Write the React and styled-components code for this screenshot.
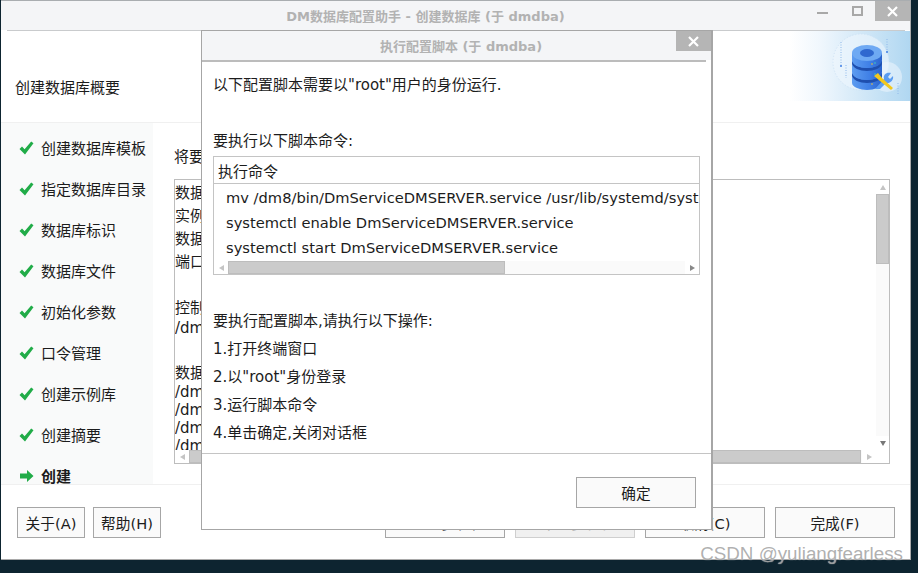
import React from 'react'
import styled, { createGlobalStyle } from 'styled-components'

const GlobalStyle = createGlobalStyle`
  html, body {
    margin: 0;
    background: #0d2430;
  }

  body {
    width: 918px;
    height: 573px;
    overflow: hidden;
    font-family: "DejaVu Sans", "Noto Sans CJK SC", sans-serif;
    font-size: 15px;
    color: #1c1c1c;
  }
`

const Window = styled.div`
  position: relative;
  box-sizing: border-box;
  display: flex;
  flex-direction: column;
  width: 910px;
  height: 560px;
  margin-left: 1px;
  background: #fff;
  border-top: 1px solid #a9adb0;
  border-right: 1px solid #a9a9a9;
  border-bottom: 1px solid #a9a9a9;
`

const TitleBar = styled.div`
  display: flex;
  flex: none;
  height: 29px;
  padding-left: 33px;
  background: #f4f5f7;
`

const TitleRule = styled.div`
  flex: none;
  height: ${p => p.$h}px;
  margin: 0 ${p => p.$right}px 0 ${p => p.$left}px;
  background: ${p => p.$color};
`

const TitleText = styled.div`
  flex: 1;
  padding-top: ${p => p.$top}px;
  padding-left: ${p => p.$left || 0}px;
  text-align: center;
  font-size: 13px;
  font-weight: bold;
  line-height: 20px;
  color: #b2b2b2;
`

const Controls = styled.div`
  display: flex;
  align-items: flex-start;
  flex: none;
  width: 93px;
`

const ControlSlot = styled.div`
  display: flex;
  align-items: center;
  justify-content: center;
  width: ${p => p.$width}px;
  height: 20px;
`

const MinGlyph = styled.div`
  width: 11px;
  height: 2px;
  margin-top: 3px;
  background: #a8a8a8;
`

const MaxGlyph = styled.div`
  box-sizing: border-box;
  width: 11px;
  height: 10px;
  border: 2px solid #a8a8a8;
`

const CloseButton = styled.div`
  display: flex;
  flex: none;
  align-items: center;
  justify-content: center;
  width: 35px;
  height: 20px;
  background: #b5b5b5;
`

const Header = styled.div`
  display: flex;
  flex: none;
  justify-content: space-between;
  height: 91px;
  border-bottom: 1px solid #f0f0f0;
`

const HeaderTitle = styled.div`
  padding: 47px 0 0 14px;
  line-height: 20px;
`

const Banner = styled.svg`
  display: block;
  flex: none;
  width: 120px;
  height: 70px;
`

const Main = styled.div`
  display: flex;
  flex: none;
  height: 361px;
  overflow: hidden;
  border-bottom: 1px solid #f0f0f0;
`

const Sidebar = styled.div`
  flex: none;
  box-sizing: border-box;
  width: 152px;
  padding-top: 4px;
  background: #f9fafa;
`

const Step = styled.div`
  display: flex;
  align-items: center;
  gap: 7px;
  height: 41px;
  padding-left: 18px;
  font-weight: ${p => (p.$active ? 'bold' : 'normal')};
`

const Content = styled.div`
  flex: 1;
  display: flex;
  flex-direction: column;
  padding: 24px 20px 0 21px;
`

const ContentLabel = styled.div`
  height: 32px;
  line-height: 20px;
`

const SummaryBox = styled.div`
  position: relative;
  box-sizing: border-box;
  display: grid;
  grid-template-columns: 1fr 13px;
  grid-template-rows: 1fr 13px;
  height: 285px;
  border: 1px solid #bdbdbd;
`

const SummaryText = styled.div`
  padding-top: 2px;
  overflow: hidden;
  white-space: nowrap;
`

const SummaryLine = styled.div`
  height: ${p => p.$h}px;
  line-height: ${p => p.$h}px;
`

const VScroll = styled.div`
  display: flex;
  flex-direction: column;
  align-items: center;
  background: #fafafa;
`

const HScroll = styled.div`
  display: flex;
  flex: none;
  align-items: center;
  background: #fafafa;
  height: 13px;
`

const ScrollGap = styled.div`
  flex: 1;
`

const ArrowCell = styled.div`
  display: flex;
  flex: none;
  align-items: center;
  justify-content: center;
  background: #fff;
  width: ${p => p.$w}px;
  height: ${p => p.$h}px;
`

const Thumb = styled.div`
  flex: none;
  box-sizing: border-box;
  background: #cbcbcb;
  border: 1px solid #bdbdbd;
  width: ${p => p.$w}px;
  height: ${p => p.$h}px;
`

const Corner = styled.div`
  background: #fff;
`

const Triangle = styled.div`
  width: 0;
  height: 0;
  border-style: solid;
  ${p => p.$dir === 'up' && `border-width: 0 3px 5px; border-color: transparent transparent ${p.$color};`}
  ${p => p.$dir === 'down' && `border-width: 5px 3px 0; border-color: ${p.$color} transparent transparent;`}
  ${p => p.$dir === 'left' && `border-width: 3px 5px 3px 0; border-color: transparent ${p.$color} transparent transparent;`}
  ${p => p.$dir === 'right' && `border-width: 3px 0 3px 5px; border-color: transparent transparent transparent ${p.$color};`}
`

const Footer = styled.div`
  display: flex;
  flex: 1;
  align-items: flex-start;
  padding: 22px 15px 0 16px;
`

const ButtonGroup = styled.div`
  display: flex;
  gap: ${p => p.$gap}px;
  margin-left: ${p => (p.$right ? 'auto' : '0')};
`

const Button = styled.div`
  box-sizing: border-box;
  display: flex;
  align-items: center;
  justify-content: center;
  width: ${p => p.$w || 120}px;
  height: 31px;
  background: ${p => (p.$disabled ? '#f0f0f0' : '#fafafa')};
  border: 1px solid ${p => (p.$disabled ? '#cfcfcf' : '#a6a6a6')};
  color: ${p => (p.$disabled ? '#aaa' : '#1c1c1c')};
  font-size: 14.67px;
`

const Dialog = styled.div`
  position: absolute;
  top: 29px;
  left: 200px;
  box-sizing: border-box;
  display: flex;
  flex-direction: column;
  width: 512px;
  height: 500px;
  background: #fff;
  border-left: 1px solid #a6a6a6;
  border-right: 2px solid #a6a6a6;
  border-bottom: 1px solid #a6a6a6;
  border-top: 1px solid #a6a6a6;
`

const DialogTitleBar = styled.div`
  display: flex;
  flex: none;
  height: 29px;
  background: #f4f5f7;
`

const DialogBody = styled.div`
  box-sizing: border-box;
  display: flex;
  flex: none;
  flex-direction: column;
  height: 392px;
  padding: 13px 11px 0;
  border-bottom: 1px solid #c4c4c4;
`

const Para = styled.div`
  line-height: 20px;
  margin-top: ${p => p.$top || 0}px;
`

const CommandTable = styled.div`
  box-sizing: border-box;
  display: flex;
  flex-direction: column;
  width: 487px;
  height: 119px;
  margin-top: 5px;
  border: 1px solid #c4c4c4;
`

const TableHead = styled.div`
  box-sizing: border-box;
  flex: none;
  height: 27px;
  padding: 5px 0 0 4px;
  line-height: 20px;
  border-bottom: 1px solid #c4c4c4;
`

const TableRows = styled.div`
  flex: 1;
  padding: 1px 0 0 12px;
  overflow: hidden;
  white-space: nowrap;
  font-size: 14.67px;
`

const TableRow = styled.div`
  height: 25px;
  line-height: 25px;
`

const StepList = styled.div`
  display: flex;
  flex-direction: column;
  gap: 8px;
  margin-top: 36px;
`

const DialogFooter = styled.div`
  display: flex;
  flex: 1;
  justify-content: flex-end;
  padding: 23px 15px 0 0;
`

const Watermark = styled.div`
  position: absolute;
  right: 7px;
  bottom: -5px;
  font-family: "Liberation Sans", sans-serif;
  font-size: 18.8px;
  line-height: 20px;
  color: rgba(150, 150, 150, 0.75);
  text-shadow: 0 0 1px rgba(255, 255, 255, 0.8);
  white-space: nowrap;
`

const CloseIcon = () => (
  <svg width="11" height="11" viewBox="0 0 11 11">
    <path d="M1 1 L10 10 M10 1 L1 10" stroke="#fff" strokeWidth="2.2" />
  </svg>
)

const CheckIcon = () => (
  <svg width="15" height="14" viewBox="0 0 15 14">
    <path d="M0.5 8 L3 5.5 L5.6 8.3 L12.2 0.5 L14.5 2.2 L6 13.5 Z" fill="#21ac48" />
  </svg>
)

const ArrowIcon = () => (
  <svg width="15" height="14" viewBox="0 0 15 14">
    <path d="M1 4.5 H8 V1 L14.5 7 L8 13 V9.5 H1 Z" fill="#21ac48" />
  </svg>
)

const DbBanner = () => (
  <Banner viewBox="0 0 120 70">
    <defs>
      <linearGradient id="bannerBg" x1="0" x2="1" y1="0" y2="0">
        <stop offset="0" stopColor="#fff" />
        <stop offset="0.25" stopColor="#f0f7fd" />
        <stop offset="1" stopColor="#b0d7f1" />
      </linearGradient>
      <linearGradient id="dbSide" x1="0" x2="1" y1="0" y2="0">
        <stop offset="0" stopColor="#5d9cf0" />
        <stop offset="0.6" stopColor="#3f7fe6" />
        <stop offset="1" stopColor="#2b63cc" />
      </linearGradient>
    </defs>
    <rect width="120" height="70" fill="url(#bannerBg)" />
    <circle cx="71" cy="31" r="28" fill="#eef6fd" fillOpacity="0.6" stroke="#cfe3f6" strokeDasharray="1 2" />
    <circle cx="97" cy="46" r="15" fill="#eef6fd" fillOpacity="0.55" />
    <path d="M51 11 V35 M97 8 V21 M56 34 V47 M108 52 V64" stroke="#8fb8ea" strokeDasharray="1 1.5" />
    <circle cx="51" cy="35" r="1" fill="#3f7fe6" />
    <circle cx="97" cy="21" r="1" fill="#3f7fe6" />
    <path d="M62 42 V52 C62 56 70 59 77 59 C84 59 92 56 92 52 V42 Z" fill="url(#dbSide)" />
    <path d="M62 41 C62 46 70 49 77 49 C84 49 92 46 92 41 V44 C92 49 84 52 77 52 C70 52 62 49 62 44 Z" fill="#1f4fae" />
    <path d="M62 30 V41 C62 46 70 49 77 49 C84 49 92 46 92 41 V30 Z" fill="url(#dbSide)" />
    <path d="M62 29 C62 34 70 37 77 37 C84 37 92 34 92 29 V32 C92 37 84 40 77 40 C70 40 62 37 62 32 Z" fill="#1f4fae" />
    <path d="M62 22 V29 C62 34 70 37 77 37 C84 37 92 34 92 29 V22 Z" fill="url(#dbSide)" />
    <ellipse cx="77" cy="22" rx="15" ry="8" fill="#6ea9f3" />
    <ellipse cx="77" cy="22" rx="7" ry="4" fill="#2f68cf" />
    <circle cx="85" cy="32" r="0.8" fill="#39d0c0" />
    <circle cx="82" cy="33" r="0.8" fill="#f4c430" />
    <circle cx="85" cy="43" r="0.8" fill="#39d0c0" />
    <circle cx="82" cy="53" r="0.8" fill="#f4c430" />
    <path d="M85 58 L94 48 C93 44 96 41 101 42 L98 46 L100 48 L103 45 C104 49 100 53 96 52 L90 58 Z" fill="#5a9cf2" />
    <path d="M84 45 L88 42 L92 47 L103 57 L101 59 L90 50 Z" fill="#f2c81e" />
  </Banner>
)

const steps = ['创建数据库模板', '指定数据库目录', '数据库标识', '数据库文件', '初始化参数', '口令管理', '创建示例库', '创建摘要']

const summary = [
  ['数据库名: DAMENG', 23],
  ['实例名: DMSERVER', 23],
  ['数据库目录: /dm8/data', 23],
  ['端口: 5236', 23],
  ['', 24],
  ['控制文件:', 21],
  ['/dm8/data/DAMENG/dm.ctl', 18],
  ['', 26],
  ['数据文件:', 20],
  ['/dm8/data/DAMENG/SYSTEM.DBF', 18],
  ['/dm8/data/DAMENG/ROLL.DBF', 18],
  ['/dm8/data/DAMENG/MAIN.DBF', 18],
  ['/dm8/data/DAMENG/TEMP.DBF', 18]
]

const commands = [
  'mv /dm8/bin/DmServiceDMSERVER.service /usr/lib/systemd/system/DmServiceDMSERVER.service',
  'systemctl enable DmServiceDMSERVER.service',
  'systemctl start DmServiceDMSERVER.service'
]

const instructions = ['要执行配置脚本,请执行以下操作:', '1.打开终端窗口', '2.以"root"身份登录', '3.运行脚本命令', '4.单击确定,关闭对话框']

const App = () => (
  <>
    <GlobalStyle />
    <Window>
      <TitleBar>
        <TitleText $top={6}>DM数据库配置助手 - 创建数据库 (于 dmdba)</TitleText>
        <Controls>
          <ControlSlot $width={11}><MinGlyph /></ControlSlot>
          <ControlSlot $width={24} />
          <ControlSlot $width={11}><MaxGlyph /></ControlSlot>
          <ControlSlot $width={12} />
          <CloseButton><CloseIcon /></CloseButton>
        </Controls>
      </TitleBar>
      <TitleRule $h={1} $left={6} $right={5} $color="#c9cbcd" />

      <Header>
        <HeaderTitle>创建数据库概要</HeaderTitle>
        <DbBanner />
      </Header>

      <Main>
        <Sidebar>
          {steps.map(name => (
            <Step key={name}><CheckIcon />{name}</Step>
          ))}
          <Step $active><ArrowIcon />创建</Step>
        </Sidebar>
        <Content>
          <ContentLabel>将要创建的数据库概要如下:</ContentLabel>
          <SummaryBox>
            <SummaryText>
              {summary.map(([text, h], i) => (
                <SummaryLine key={i} $h={h}>{text}</SummaryLine>
              ))}
            </SummaryText>
            <VScroll>
              <ArrowCell $w={13} $h={14}><Triangle $dir="up" $color="#c4c4c4" /></ArrowCell>
              <Thumb $w={13} $h={70} />
              <ScrollGap />
              <ArrowCell $w={13} $h={14}><Triangle $dir="down" $color="#777" /></ArrowCell>
            </VScroll>
            <HScroll>
              <ArrowCell $w={14} $h={13}><Triangle $dir="left" $color="#c4c4c4" /></ArrowCell>
              <Thumb $w={672} $h={13} />
              <ScrollGap />
              <ArrowCell $w={14} $h={13}><Triangle $dir="right" $color="#c4c4c4" /></ArrowCell>
            </HScroll>
            <Corner />
          </SummaryBox>
        </Content>
      </Main>

      <Footer>
        <ButtonGroup $gap={8}>
          <Button $w={68}>关于(A)</Button>
          <Button $w={68}>帮助(H)</Button>
        </ButtonGroup>
        <ButtonGroup $right $gap={10}>
          <Button>上一步(B)</Button>
          <Button $disabled>下一步(N)</Button>
          <Button>取消(C)</Button>
          <Button>完成(F)</Button>
        </ButtonGroup>
      </Footer>

      <Dialog>
        <DialogTitleBar>
          <TitleText $top={6} $left={44}>执行配置脚本 (于 dmdba)</TitleText>
          <CloseButton><CloseIcon /></CloseButton>
        </DialogTitleBar>
        <TitleRule $h={2} $left={0} $right={5} $color="#bcbcbc" />
        <DialogBody>
          <Para>以下配置脚本需要以"root"用户的身份运行.</Para>
          <Para $top={36}>要执行以下脚本命令:</Para>
          <CommandTable>
            <TableHead>执行命令</TableHead>
            <TableRows>
              {commands.map(cmd => (
                <TableRow key={cmd}>{cmd}</TableRow>
              ))}
            </TableRows>
            <HScroll>
              <ArrowCell $w={14} $h={13}><Triangle $dir="left" $color="#c4c4c4" /></ArrowCell>
              <Thumb $w={277} $h={13} />
              <ScrollGap />
              <ArrowCell $w={14} $h={13}><Triangle $dir="right" $color="#888" /></ArrowCell>
            </HScroll>
          </CommandTable>
          <StepList>
            {instructions.map(line => (
              <Para key={line}>{line}</Para>
            ))}
          </StepList>
        </DialogBody>
        <DialogFooter>
          <Button>确定</Button>
        </DialogFooter>
      </Dialog>

      <Watermark>CSDN @yuliangfearless</Watermark>
    </Window>
  </>
)

export default App
